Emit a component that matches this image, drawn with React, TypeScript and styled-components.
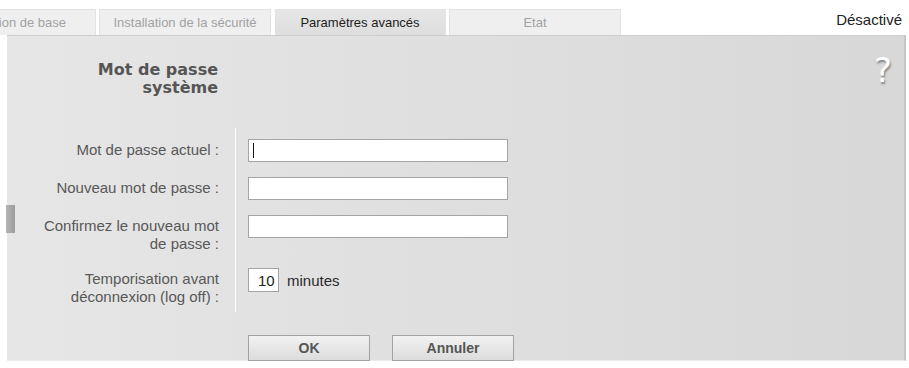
import React from 'react';
import styled, { createGlobalStyle } from 'styled-components';

const GlobalStyle = createGlobalStyle`
  html, body {
    margin: 0;
    padding: 0;
    background: #ffffff;
    font-family: 'Liberation Sans', Arial, sans-serif;
  }
`;

const Page = styled.div`
  width: 909px;
  height: 368px;
  padding-top: 9px;
  box-sizing: border-box;
  overflow: hidden;
`;

const TabBar = styled.div`
  display: flex;
  align-items: flex-start;
  height: 26px;
`;

const Tabs = styled.div`
  display: flex;
  gap: 3px;
  margin-left: -76px;
  flex: 1;
`;

const Tab = styled.div<{ $active?: boolean }>`
  width: 172px;
  height: 26px;
  box-sizing: border-box;
  line-height: 25px;
  text-align: center;
  font-size: 13px;
  white-space: nowrap;
  color: ${(p) => (p.$active ? '#1e1e1e' : '#a2a2a2')};
  background: ${(p) => (p.$active ? 'linear-gradient(#e6e6e6, #dedede)' : '#efefef')};
  border: 1px solid ${(p) => (p.$active ? '#e4e4e4' : '#e2e2e2')};
  border-bottom: none;
  border-left-color: ${(p) => (p.$active ? '#ffffff' : '#e2e2e2')};
`;

const Status = styled.div`
  font-size: 15px;
  line-height: 21px;
  color: #222222;
  padding-right: 7px;
`;

const Panel = styled.div`
  position: relative;
  margin: 0 3px 0 7px;
  height: 326px;
  box-sizing: border-box;
  background: linear-gradient(to right, #e6e6e6, #d8d8d8);
  border-top: 1px solid #cdcdcd;
  border-right: 2px solid #c6c6c6;
  border-bottom: 1px solid #ececec;
  padding-top: 25px;
`;

const Title = styled.h2`
  margin: 0;
  width: 228px;
  box-sizing: border-box;
  padding-right: 17px;
  text-align: right;
  font-family: 'DejaVu Sans', Verdana, sans-serif;
  font-size: 16px;
  line-height: 18px;
  font-weight: bold;
  color: #555555;
`;

const Help = styled.div`
  position: absolute;
  top: 16px;
  right: 12px;
  font-family: 'DejaVu Sans', Verdana, sans-serif;
  font-size: 34px;
  line-height: 36px;
  color: #ffffff;
  text-shadow: 1px 2px 2px rgba(0, 0, 0, 0.4);
`;

const Handle = styled.div`
  position: absolute;
  left: -1px;
  top: 169px;
  width: 9px;
  height: 28px;
  background: linear-gradient(to right, #b4b4b4, #9c9c9c);
`;

const Form = styled.div`
  position: relative;
  margin-top: 31px;
  padding: 11px 0 6px;
  display: grid;
  grid-template-columns: 228px 1fr;
  row-gap: 15px;
  align-items: start;

  &::before {
    content: '';
    position: absolute;
    left: 228px;
    top: 0;
    bottom: 0;
    width: 1px;
    background: #ffffff;
  }
`;

const Label = styled.div`
  padding: 2px 16px 0 0;
  text-align: right;
  font-size: 15px;
  line-height: 18px;
  color: #585858;
`;

const Field = styled.div`
  position: relative;
  display: flex;
  align-items: center;
  gap: 8px;
  padding-left: 13px;
`;

const TextInput = styled.input<{ $short?: boolean }>`
  width: ${(p) => (p.$short ? '31px' : '260px')};
  height: ${(p) => (p.$short ? '24px' : '23px')};
  box-sizing: border-box;
  margin: 0;
  padding: 0 0 0 ${(p) => (p.$short ? '9px' : '4px')};
  border: 1px solid #a4a4a4;
  background: #ffffff;
  font-family: 'Liberation Sans', Arial, sans-serif;
  font-size: 15px;
  color: #222222;
  outline: none;
`;

const Caret = styled.span`
  position: absolute;
  left: 18px;
  top: 4px;
  width: 1px;
  height: 15px;
  background: #111111;
`;

const Unit = styled.span`
  font-size: 15px;
  color: #2a2a2a;
`;

const Actions = styled.div`
  display: flex;
  gap: 22px;
  margin-top: 23px;
  padding-left: 241px;
`;

const Button = styled.button`
  width: 122px;
  height: 26px;
  margin: 0;
  padding: 0;
  border: 1px solid #a2a2a2;
  background: linear-gradient(#f2f2f2, #dcdcdc);
  font-family: 'Liberation Sans', Arial, sans-serif;
  font-size: 14px;
  font-weight: bold;
  color: #555555;
`;

const tabs = ['Installation de base', 'Installation de la sécurité', 'Paramètres avancés', 'Etat'];

export default function App() {
  return (
    <Page>
      <GlobalStyle />
      <TabBar>
        <Tabs>
          {tabs.map((t) => (
            <Tab key={t} $active={t === 'Paramètres avancés'}>
              {t}
            </Tab>
          ))}
        </Tabs>
        <Status>Désactivé</Status>
      </TabBar>
      <Panel>
        <Handle />
        <Help>?</Help>
        <Title>
          Mot de passe
          <br />
          système
        </Title>
        <Form>
          <Label>Mot de passe actuel :</Label>
          <Field>
            <TextInput type="password" />
            <Caret />
          </Field>
          <Label>Nouveau mot de passe :</Label>
          <Field>
            <TextInput type="password" />
          </Field>
          <Label>
            Confirmez le nouveau mot
            <br />
            de passe :
          </Label>
          <Field>
            <TextInput type="password" />
          </Field>
          <Label>
            Temporisation avant
            <br />
            déconnexion (log off) :
          </Label>
          <Field>
            <TextInput $short defaultValue="10" />
            <Unit>minutes</Unit>
          </Field>
        </Form>
        <Actions>
          <Button>OK</Button>
          <Button>Annuler</Button>
        </Actions>
      </Panel>
    </Page>
  );
}
